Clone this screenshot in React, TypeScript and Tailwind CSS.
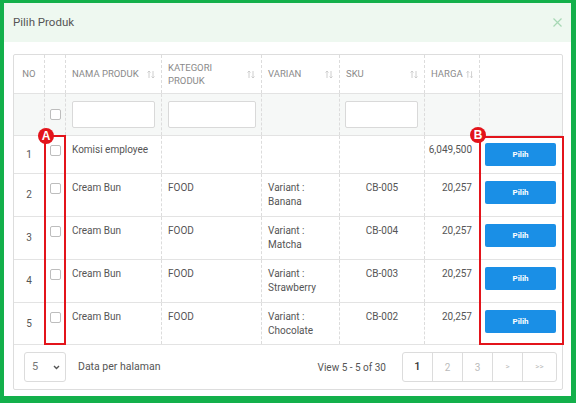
import React from "react";

const cols = "grid grid-cols-[31px_21px_96px_100px_78px_85px_55px_82px]";

const rows = [
  { no: 1, name: "Komisi employee", cat: "", varian: [], sku: "", harga: "6,049,500", h: "h-[38px]" },
  { no: 2, name: "Cream Bun", cat: "FOOD", varian: ["Variant :", "Banana"], sku: "CB-005", harga: "20,257", h: "h-[43px]" },
  { no: 3, name: "Cream Bun", cat: "FOOD", varian: ["Variant :", "Matcha"], sku: "CB-004", harga: "20,257", h: "h-[43px]" },
  { no: 4, name: "Cream Bun", cat: "FOOD", varian: ["Variant :", "Strawberry"], sku: "CB-003", harga: "20,257", h: "h-[43px]" },
  { no: 5, name: "Cream Bun", cat: "FOOD", varian: ["Variant :", "Chocolate"], sku: "CB-002", harga: "20,257", h: "h-[42px]" },
];

const SortIcon = () => (
  <svg width="8" height="9" viewBox="0 0 8 9" fill="none" stroke="#c8c8c8" strokeWidth="0.9">
    <path d="M2 8V1M0.5 2.5L2 1l1.5 1.5" />
    <path d="M6 1v7M4.5 6.5L6 8l1.5-1.5" />
  </svg>
);

const Checkbox = () => (
  <div className="w-[11px] h-[11px] border border-[#bdbdbd] rounded-[2px] bg-white" />
);

const cell = "border-r border-dashed border-[#dcdcdc]";

export default function App() {
  return (
    <div className="relative w-[576px] h-[403px] font-['Roboto',sans-serif]">
      <div className="w-[576px] h-[403px] bg-white border-[#13b04b] border-l-4 border-t-[3px] border-r-[5px] border-b-[7px] flex flex-col">
        <div className="h-[39px] bg-[#eef8f0] flex items-center justify-between pl-[9px] pr-[9px] shrink-0">
          <span className="text-[11.5px] text-[#555]">Pilih Produk</span>
          <svg width="9" height="9" viewBox="0 0 9 9" stroke="#a7d8b5" strokeWidth="1.2">
            <path d="M0.5 0.5l8 8M8.5 0.5l-8 8" />
          </svg>
        </div>
        <div className="pl-[9px] pr-[8px] pt-[12px]">
          <div className="border border-[#dddddd] rounded-[2px]">
            <div className={`${cols} h-[39px] border-b border-[#e3e3e3] text-[9.5px] text-[#8a8a8a]`}>
              <div className={`${cell} flex items-center justify-center`}>NO</div>
              <div className={cell} />
              <div className={`${cell} flex items-center justify-between px-[6px]`}>
                <span>NAMA PRODUK</span>
                <SortIcon />
              </div>
              <div className={`${cell} flex items-center justify-between px-[6px]`}>
                <span className="leading-[13px]">KATEGORI<br />PRODUK</span>
                <SortIcon />
              </div>
              <div className={`${cell} flex items-center justify-between px-[6px]`}>
                <span>VARIAN</span>
                <SortIcon />
              </div>
              <div className={`${cell} flex items-center justify-between px-[6px]`}>
                <span>SKU</span>
                <SortIcon />
              </div>
              <div className={`${cell} flex items-center gap-[3px] px-[6px]`}>
                <span>HARGA</span>
                <SortIcon />
              </div>
              <div />
            </div>
            <div className={`${cols} h-[42px] border-b border-[#e3e3e3] bg-[#f6f8f7]`}>
              <div className={cell} />
              <div className={`${cell} flex items-center justify-center`}>
                <Checkbox />
              </div>
              <div className={`${cell} flex items-center px-[6px]`}>
                <div className="w-full h-[27px] border border-[#d9d9d9] rounded-[2px] bg-white" />
              </div>
              <div className={`${cell} flex items-center pl-[6px] pr-[5px]`}>
                <div className="w-full h-[27px] border border-[#d9d9d9] rounded-[2px] bg-white" />
              </div>
              <div className={cell} />
              <div className={`${cell} flex items-center pl-[5px] pr-[6px]`}>
                <div className="w-full h-[27px] border border-[#d9d9d9] rounded-[2px] bg-white" />
              </div>
              <div className={cell} />
              <div />
            </div>
            {rows.map((r) => (
              <div key={r.no} className={`${cols} ${r.h} border-b border-[#e3e3e3] text-[10px] leading-[14px] text-[#555]`}>
                <div className={`${cell} flex items-center justify-center`}>{r.no}</div>
                <div className={`${cell} flex justify-center pt-[9px]`}>
                  <Checkbox />
                </div>
                <div className={`${cell} px-[6px] pt-[7px]`}>{r.name}</div>
                <div className={`${cell} px-[6px] pt-[7px]`}>{r.cat}</div>
                <div className={`${cell} px-[6px] pt-[7px]`}>
                  {r.varian.map((v) => (
                    <div key={v}>{v}</div>
                  ))}
                </div>
                <div className={`${cell} px-[6px] pt-[7px] text-center`}>{r.sku}</div>
                <div className={`${cell} pr-[7px] pt-[7px] text-right`}>{r.harga}</div>
                <div className="pl-[5px] pr-[6px] pt-[7px]">
                  <button className="w-full h-[23px] bg-[#1a8fe6] rounded-[2px] text-white text-[8px] font-bold">
                    Pilih
                  </button>
                </div>
              </div>
            ))}
            <div className="h-[44px] flex items-center pl-[10px] pr-[5px]">
              <div className="w-[42px] h-[30px] border border-[#dcdcdc] rounded-[3px] flex items-center justify-between pl-[7px] pr-[5px] text-[11px] text-[#777]">
                <span>5</span>
                <svg width="7" height="5" viewBox="0 0 7 5" fill="none" stroke="#555" strokeWidth="1.4">
                  <path d="M1 1l2.5 2.5L6 1" />
                </svg>
              </div>
              <span className="ml-[12px] text-[10.5px] text-[#555]">Data per halaman</span>
              <span className="ml-auto text-[10px] text-[#555]">View 5 - 5 of 30</span>
              <div className="ml-[16px] flex h-[30px] border border-[#dcdcdc] rounded-[3px] text-[10px] text-[#bbb]">
                <div className="w-[30px] flex items-center justify-center border-r border-[#dcdcdc] text-[11px] text-[#333] font-medium">1</div>
                <div className="w-[30px] flex items-center justify-center border-r border-[#dcdcdc]">2</div>
                <div className="w-[30px] flex items-center justify-center border-r border-[#dcdcdc]">3</div>
                <div className="w-[30px] flex items-center justify-center border-r border-[#dcdcdc] text-[8px]">&gt;</div>
                <div className="w-[33px] flex items-center justify-center text-[8px]">&gt;&gt;</div>
              </div>
            </div>
          </div>
        </div>
      </div>
      <div className="absolute left-[44px] top-[135px] w-[22px] h-[210px] border-2 border-[#e3141b]" />
      <div className="absolute left-[479px] top-[136px] w-[85px] h-[209px] border-2 border-[#e3141b]" />
      <div className="absolute left-[38px] top-[128px] w-[16px] h-[16px] rounded-full bg-[#e3141b] flex items-center justify-center text-white text-[12px] font-bold font-['Liberation_Sans',sans-serif]">
        A
      </div>
      <div className="absolute left-[470px] top-[127px] w-[16px] h-[16px] rounded-full bg-[#e3141b] flex items-center justify-center text-white text-[12px] font-bold font-['Liberation_Sans',sans-serif]">
        B
      </div>
    </div>
  );
}
